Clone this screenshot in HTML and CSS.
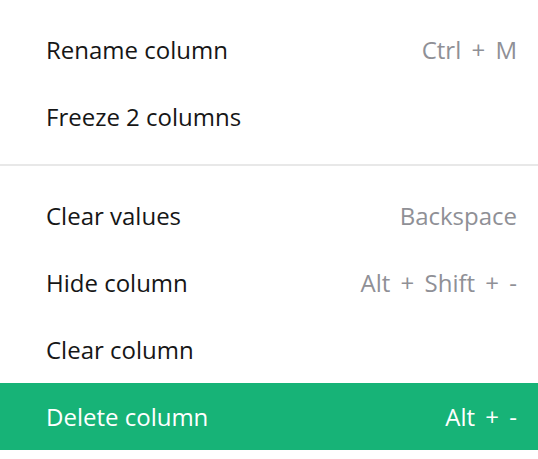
FILE: index.html
```html
<!DOCTYPE html>
<html lang="en">
<head>
<meta charset="utf-8">
<link rel="stylesheet" href="styles.css">
</head>
<body>
<div class="menu">
  <div class="item"><span class="label">Rename column</span><span class="key">Ctrl + M</span></div>
  <div class="item"><span class="label">Freeze 2 columns</span></div>
  <div class="divider"></div>
  <div class="item"><span class="label">Clear values</span><span class="key">Backspace</span></div>
  <div class="item"><span class="label">Hide column</span><span class="key">Alt + Shift + -</span></div>
  <div class="item"><span class="label">Clear column</span></div>
  <div class="item active"><span class="label">Delete column</span><span class="key">Alt + -</span></div>
</div>
</body>
</html>
```

FILE: styles.css
```css
html, body {
  margin: 0;
  padding: 0;
  background: #ffffff;
}
.menu {
  padding-top: 16px;
  font-family: "Open Sans", "Noto Sans", sans-serif;
  font-size: 24px;
  color: #161616;
}
.item {
  height: 67px;
  display: flex;
  align-items: center;
  justify-content: space-between;
  padding: 0 21px 0 46px;
}
.key {
  color: #8f9096;
  word-spacing: 4px;
}
.divider {
  height: 2px;
  background: #e8e8e8;
  margin: 14px 0 16px;
}
.item.active {
  background: #17b377;
  color: #ffffff;
}
.item.active .key {
  color: #ffffff;
}
```
